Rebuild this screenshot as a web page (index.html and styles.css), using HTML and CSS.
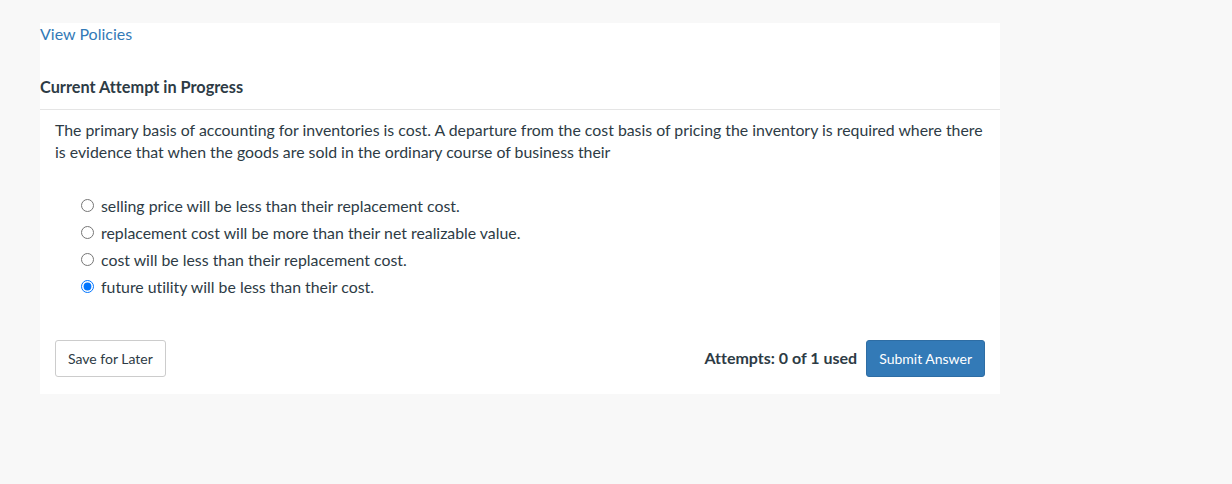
FILE: index.html
```html
<!DOCTYPE html>
<html>
<head>
<meta charset="utf-8">
<link rel="stylesheet" href="styles.css">
</head>
<body>
<div class="panel">
  <a class="policies" href="#">View Policies</a>
  <h2 class="attempt-title">Current Attempt in Progress</h2>
  <div class="question">
    <p class="stem">The primary basis of accounting for inventories is cost. A departure from the cost basis of pricing the inventory is required where there is evidence that when the goods are sold in the ordinary course of business their</p>
    <ul class="options">
      <li><label><input type="radio" name="q"> selling price will be less than their replacement cost.</label></li>
      <li><label><input type="radio" name="q"> replacement cost will be more than their net realizable value.</label></li>
      <li><label><input type="radio" name="q"> cost will be less than their replacement cost.</label></li>
      <li><label><input type="radio" name="q" checked> future utility will be less than their cost.</label></li>
    </ul>
    <div class="actions">
      <button class="btn btn-default">Save for Later</button>
      <div class="submit-group">
        <span class="attempts">Attempts: 0 of 1 used</span>
        <button class="btn btn-primary">Submit Answer</button>
      </div>
    </div>
  </div>
</div>
</body>
</html>
```
FILE: styles.css
```css
html, body {
  margin: 0;
  padding: 0;
  background: #f8f8f8;
  font-family: Lato, "Liberation Sans", sans-serif;
  font-size: 15.85px;
  line-height: 22px;
  color: #2d3b45;
  font-variant-ligatures: none;
}
.panel {
  width: 960px;
  margin: 23px 0 0 40px;
  background: #fff;
  padding-bottom: 17px;
}
.policies {
  display: block;
  color: #337ab7;
  text-decoration: none;
  line-height: 22px;
  font-size: 16px;
}
.attempt-title {
  margin: 31px 0 0;
  font-size: 16.3px;
  font-weight: 700;
  line-height: 22px;
  padding-bottom: 11px;
  border-bottom: 1px solid #e5e5e5;
  color: #2d3b45;
}
.question {
  padding: 9px 12px 0 15px;
}
.stem {
  margin: 0;
  line-height: 22px;
}
.options {
  list-style: none;
  margin: 29px 0 0;
  padding: 0 0 0 21px;
}
.options li {
  height: 27px;
  line-height: 27px;
}
.options label {
  display: flex;
  align-items: center;
  gap: 4px;
}
.options input {
  margin: 0 3px 0 5px;
  width: 13px;
  height: 13px;
}
.actions {
  display: flex;
  justify-content: space-between;
  align-items: center;
  margin: 40px 3px 0 0;
}
.submit-group {
  display: flex;
  align-items: center;
  gap: 9px;
}
.attempts {
  font-weight: 700;
  font-size: 16px;
  color: #2d3b45;
  position: relative;
  top: -1px;
}
.btn {
  font-family: Lato, "Liberation Sans", sans-serif;
  font-size: 14px;
  height: 37px;
  padding: 0 12px;
  border-radius: 3px;
  cursor: pointer;
}
.btn-default {
  background: #fff;
  border: 1px solid #ccc;
  color: #2d3b45;
}
.btn-primary {
  background: #337ab7;
  border: 1px solid #2e6da4;
  color: #fff;
}
```
